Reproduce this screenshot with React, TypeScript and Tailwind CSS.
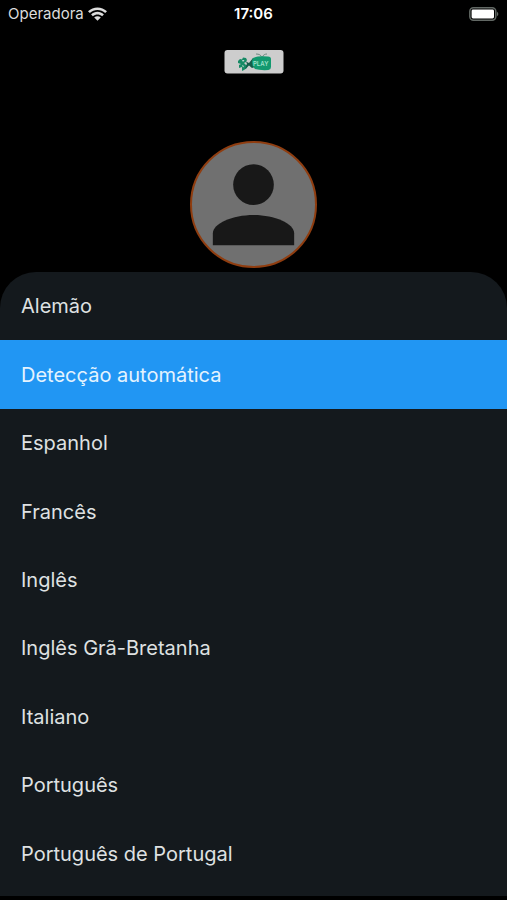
import React, { useState } from "react";

const languages = [
  "Alemão",
  "Detecção automática",
  "Espanhol",
  "Francês",
  "Inglês",
  "Inglês Grã-Bretanha",
  "Italiano",
  "Português",
  "Português de Portugal",
];

function WifiIcon() {
  return (
    <svg viewBox="0 0 19 14" className="w-[19px] h-3.5" fill="currentColor">
      <path d="M0 4.3C5.2 -0.9 13.8 -0.9 19 4.3L17.2 6.1C12.9 1.9 6.100 1.9 1.800 6.100Z" />
      <path d="M3.100 7.400C6.600 4 12.400 4 15.900 7.400L14.100 9.200C11.500 6.800 7.500 6.800 4.900 9.200Z" />
      <path d="M9.500 13.800L6.200 10.500C8.100 8.800 10.900 8.800 12.800 10.500Z" />
    </svg>
  );
}

function BatteryIcon() {
  return (
    <svg viewBox="0 0 30 14" className="w-[30px] h-3.5">
      <rect x="0.8" y="0.8" width="26" height="12.4" rx="3.6" fill="none" stroke="#626864" strokeWidth="1.5" />
      <rect x="2.6" y="2.6" width="22.4" height="8.8" rx="1.4" fill="#fff" />
      <path d="M28 4.8C29.8 5.6 29.8 8.4 28 9.2Z" fill="#626864" />
    </svg>
  );
}

function Logo() {
  return (
    <svg viewBox="0 0 60 24" className="w-[60px] h-6" role="img" aria-label="Play">
      <rect x="0.5" width="59" height="23.5" rx="3" fill="#cdcdcd" />
      <path d="M14 11L16 9L18 9.500L19 7.500L22 8L23 10L22 12L20 13L22 15L24 14L23 18L20 20L18 21L18 17L15 18L15 15L17 14L14 13Z" fill="#178a65" />
      <path d="M18 10L20.500 10L19 12ZM18 15L20 16L19 17.500Z" fill="#c2d9d0" />
      <path d="M22 11.500L25 13L29 8L31 8V17L28 18L25 15.500L21 19L23 14Z" fill="#155d49" />
      <path d="M37.500 7C37 5 35 4 32 4M38.500 7C39 5 41 4 43 4" fill="none" stroke="#58796d" strokeWidth="0.8" />
      <path d="M29 8Q34 5.500 44 6.500Q47 6.500 47 9V17Q47 19.500 44.500 20Q36 20.500 31 19Q26 14 29 8Z" fill="#12996f" />
      <text x="29" y="15.500" fontSize="6" fontWeight="600" fontFamily="Inter, sans-serif" fill="#9ee0ca">
        PLAY
      </text>
    </svg>
  );
}

function Avatar() {
  return (
    <div className="size-[127px] rounded-full border-2 border-[#8f3d10] bg-[#707070] overflow-hidden">
      <svg viewBox="0 0 124 124" className="w-full h-full" fill="#181818">
        <circle cx="62" cy="42" r="20.5" />
        <path d="M21 103V91C21 81 41 72.500 62 72.500S103 81 103 91V103Z" />
      </svg>
    </div>
  );
}

export default function App() {
  const [selected, setSelected] = useState("Detecção automática");

  return (
    <div className="min-h-screen flex flex-col bg-black pb-1 font-['Inter',sans-serif] text-white">
      {/* Status bar */}
      <header className="h-7 grid grid-cols-3 items-center px-2 text-[15px]">
        <div className="flex items-center gap-1 text-[#dcdcdc]">
          <span>Operadora</span>
          <WifiIcon />
        </div>
        <time className="text-center font-semibold">17:06</time>
        <div className="flex justify-end">
          <BatteryIcon />
        </div>
      </header>

      {/* Profile */}
      <div className="flex flex-col items-center pt-[22px] gap-[67px] pb-1">
        <Logo />
        <Avatar />
      </div>

      {/* Language sheet */}
      <main className="flex-1 flex flex-col rounded-t-[36px] bg-[#14191d] pb-2 overflow-hidden">
        <ul className="flex-1 grid auto-rows-fr">
          {languages.map((language) => (
            <li key={language} className="flex">
              <button
                type="button"
                aria-pressed={selected === language}
                onClick={() => setSelected(language)}
                className={`w-full min-h-14 px-[21px] text-left text-xl ${
                  selected === language ? "bg-[#2196f3] text-[#e4f3fe]" : "text-[#dfe1e2]"
                }`}
              >
                {language}
              </button>
            </li>
          ))}
        </ul>
      </main>
    </div>
  );
}
